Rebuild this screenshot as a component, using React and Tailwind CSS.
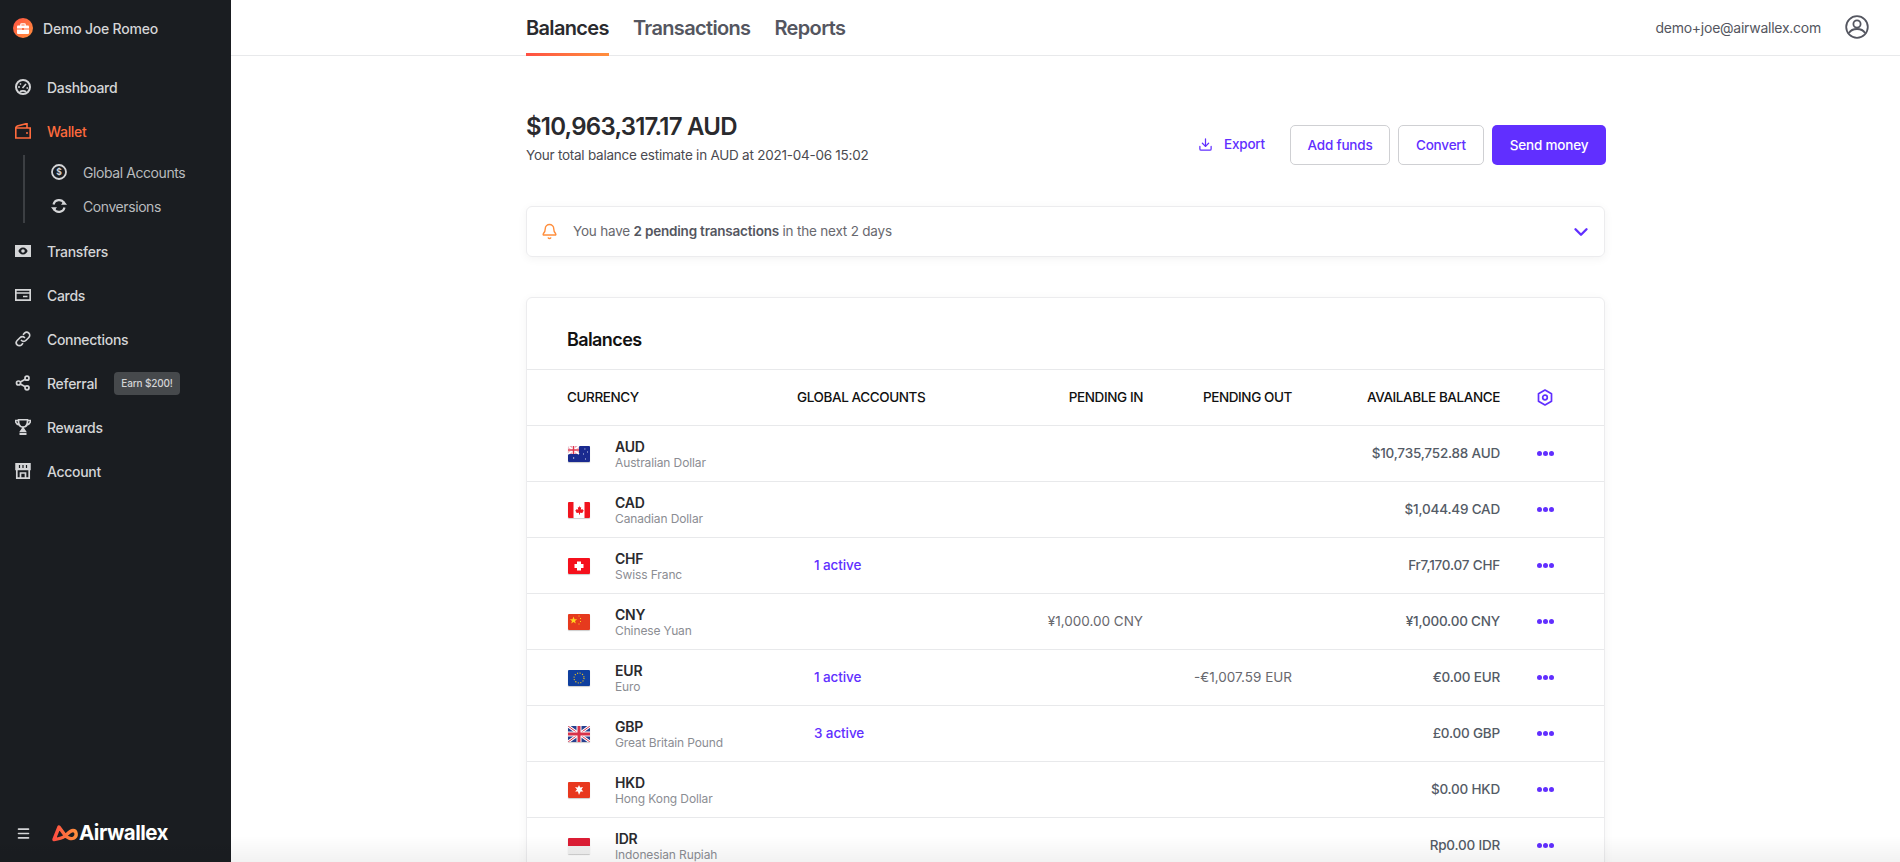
import React from "react";
import { ChevronDown, Bell, Download, Menu } from "lucide-react";

const font = { fontFamily: "Inter, 'Noto Sans', sans-serif" };

const Briefcase = () => (
  <svg width="12" height="11" viewBox="0 0 12 11" fill="none">
    <path d="M3.800 3V1.500c0-.4.300-.7.700-.7h3c.4 0 .7.300.7.700V3" stroke="#fff" strokeWidth="1.200" />
    <rect x="0" y="2.500" width="12" height="8.500" rx="1" fill="#fff" />
    <path d="M0 6h12" stroke="#ff6b3d" strokeWidth="1" />
    <rect x="5" y="5" width="2" height="2" fill="#ff6b3d" />
  </svg>
);

const icons = {
  Dashboard: (
    <svg width="16" height="16" viewBox="0 0 16 16" fill="none" stroke="currentColor" strokeWidth="2">
      <circle cx="8" cy="8" r="7" />
      <path d="M7.500 9l3.500-4M3 8h2M11.500 9H13M5 4.500l1 1M5 13c1-1.500 5-1.500 6 0" strokeWidth="1.600" />
    </svg>
  ),
  Wallet: (
    <svg width="16" height="16" viewBox="0 0 16 16" fill="none" stroke="currentColor" strokeWidth="1.600">
      <path d="M.8 5h14.400v10H.8zM.8 5c0-1 .5-1.500 1.500-2l9.700-2.500V5M11 10h2" />
    </svg>
  ),
  Transfers: (
    <svg width="16" height="12" viewBox="0 0 16 12">
      <path fillRule="evenodd" clipRule="evenodd" fill="currentColor" d="M0 0h16v12H0zM8 2.500C5.500 2.500 4 4.500 3.400 6 4 7.500 5.500 9.500 8 9.500s4-2 4.600-3.500C12 4.500 10.500 2.500 8 2.500zM8 4.200a1.800 1.800 0 110 3.600 1.800 1.800 0 010-3.600z" />
    </svg>
  ),
  Cards: (
    <svg width="16" height="12" viewBox="0 0 16 12" fill="none" stroke="currentColor" strokeWidth="1.700">
      <path d="M.8.8h14.400v10.400H.8zM.8 4h14.400M8 7.500h4.500" />
    </svg>
  ),
  Connections: (
    <svg width="16" height="16" viewBox="0 0 16 16" fill="none" stroke="currentColor" strokeWidth="1.700" strokeLinecap="round">
      <path d="M6.500 9.500a3 3 0 004.300 0l3-3a3 3 0 00-4.300-4.300L8.500 3.300" />
      <path d="M9.500 6.500a3 3 0 00-4.300 0l-3 3a3 3 0 004.300 4.300l1-1.100" />
    </svg>
  ),
  Referral: (
    <svg width="16" height="16" viewBox="0 0 16 16" fill="none" stroke="currentColor" strokeWidth="1.700">
      <circle cx="3.500" cy="8" r="2" />
      <circle cx="12" cy="3.200" r="2" />
      <circle cx="12" cy="12.800" r="2" />
      <path d="M5.300 7l5-2.800M5.300 9l5 2.800" />
    </svg>
  ),
  Rewards: (
    <svg width="16" height="16" viewBox="0 0 16 16" fill="none" stroke="currentColor" strokeWidth="1.600">
      <path d="M3.500.8h9V4c0 2.500-2 4-4.500 4S3.500 6.500 3.500 4zM.5 1.500h3c0 2 .2 3.500 1 4.500C2 5.500.5 4 .5 1.500zM15.500 1.500h-3c0 2-.2 3.500-1 4.500 2.500-.5 4-2 4-4.500z" />
      <path d="M8 8c0 2-2 3.500-2.500 4.500h5C10 11.500 8 10 8 8z" fill="currentColor" />
      <path d="M4.500 15h7" strokeWidth="2" />
    </svg>
  ),
  Account: (
    <svg width="16" height="16" viewBox="0 0 16 16" fill="none" stroke="currentColor" strokeWidth="1.500">
      <path d="M1 .8h14v5.700H1z" fill="currentColor" />
      <path d="M4.500 2v3M8 2v3M11.500 2v3" stroke="#1a1d21" strokeWidth="1.200" />
      <path d="M1.800 6.500v8.700h12.400V6.500M5.500 15.200V10h5v5.200" strokeWidth="1.700" />
    </svg>
  ),
};

const nav = ["Transfers", "Cards", "Connections", "Referral", "Rewards", "Account"];

function NavItem({ name, active, badge }) {
  return (
    <div className={`flex h-11 items-center ${active ? "text-[#ff6b3d]" : "text-[#d4d5d7]"}`}>
      <span className="flex w-[47px] shrink-0 justify-center pr-[1px]">{icons[name]}</span>
      <span className="text-[14px] font-medium tracking-[-0.3px]">{name}</span>
      {badge && (
        <span className="ml-[17px] flex h-[23px] items-center rounded-[4px] bg-[#46494c] px-[7px] text-[10px] font-medium tracking-[-0.15px] text-[#d4d5d7]">{badge}</span>
      )}
    </div>
  );
}

function Sidebar() {
  return (
    <aside className="flex h-full w-[231px] shrink-0 flex-col bg-[#1a1d21]">
      <div className="flex h-[56px] items-center pl-[13px]">
        <span className="flex h-5 w-5 items-center justify-center rounded-full bg-gradient-to-br from-[#ff4f42] to-[#ff8e3c]">
          <Briefcase />
        </span>
        <span className="ml-[10px] text-[14px] font-medium tracking-[-0.2px] text-[#d4d5d7]">Demo Joe Romeo</span>
      </div>
      <nav className="mt-[9px] flex flex-col">
        <NavItem name="Dashboard" />
        <NavItem name="Wallet" active />
        <div className="mb-[6px] ml-[23px] mt-[2px] flex flex-col border-l-2 border-[#3c3f43] pl-[26px]">
          <div className="flex h-[34px] items-center text-[#b9bbbe]">
            <svg width="16" height="16" viewBox="0 0 16 16" fill="none" className="mr-[16px]">
              <circle cx="8" cy="8" r="7" stroke="#d4d5d7" strokeWidth="1.800" />
              <text x="8" y="11" fontSize="8.500" fontWeight="700" textAnchor="middle" fill="#d4d5d7">$</text>
            </svg>
            <span className="text-[14px] tracking-[-0.42px]">Global Accounts</span>
          </div>
          <div className="flex h-[34px] items-center text-[#b9bbbe]">
            <svg width="16" height="16" viewBox="0 0 16 16" fill="none" stroke="#d4d5d7" strokeWidth="2.200" className="mr-[16px]">
              <path d="M2.500 6.500A5.700 5.700 0 0113 5M13.500 9.500A5.700 5.700 0 013 11" />
              <path d="M10 6.800h6l-3-3.800zM6 9.200H0l3 3.800z" fill="#d4d5d7" stroke="none" />
            </svg>
            <span className="text-[14px] tracking-[-0.42px]">Conversions</span>
          </div>
        </div>
        {nav.map((n) => (
          <NavItem key={n} name={n} badge={n === "Referral" ? "Earn $200!" : null} />
        ))}
      </nav>
      <div className="mt-auto mb-[16px] flex h-[26px] items-center pl-[16px]">
        <Menu size={15} strokeWidth={2.600} className="text-[#d4d5d7]" />
        <svg width="28" height="18" viewBox="0 0 28 18" fill="none" className="ml-[20px]">
          <defs>
            <linearGradient id="awx" x1="0" y1="0" x2="1" y2="0">
              <stop offset="0" stopColor="#ff4f42" />
              <stop offset="1" stopColor="#ff8e3c" />
            </linearGradient>
          </defs>
          <path d="M3 15.500L8 3l5.500 7.500C16 14 20 15.500 23 14c3.500-2 2.500-7.500-1-7.500-3 0-5 3-8 5.500C12 13.500 8 15 3 15.500z" stroke="url(#awx)" strokeWidth="3.400" strokeLinejoin="round" />
        </svg>
        <span className="text-[20.500px] font-bold tracking-[-0.5px] text-white">Airwallex</span>
      </div>
    </aside>
  );
}

const Flag = ({ code }) => {
  const flags = {
    AUD: (
      <>
        <rect width="22" height="16" fill="#1a2a8f" />
        <rect width="11" height="8" fill="#e8a0b0" />
        <path d="M0 0l11 8M11 0L0 8" stroke="#fff" strokeWidth="1.600" />
        <path d="M5.500 0v8M0 4h11" stroke="#fff" strokeWidth="2.600" />
        <path d="M5.500 0v8M0 4h11" stroke="#e0344c" strokeWidth="1.400" />
        <path d="M5 12h1.200M16.500 3h.8M19 6h.8M15 8h.8M17 13h.8" stroke="#fff" strokeWidth="1.200" />
      </>
    ),
    CAD: (
      <>
        <rect width="22" height="16" fill="#fff" />
        <rect width="5.500" height="16" fill="#f0141e" />
        <rect x="16.500" width="5.500" height="16" fill="#f0141e" />
        <path d="M11 3.500l1 2 1.200-.5-.4 2.800 1.700-.8.400 1.300 1.100.2-1.500 1.700.3.800-2.800-.3v1.800h-1v-1.800l-2.800.3.300-.8-1.500-1.700 1.100-.2.400-1.300 1.700.8-.4-2.800 1.200.5z" fill="#f0141e" />
      </>
    ),
    CHF: (
      <>
        <rect width="22" height="16" fill="#f5101c" />
        <path d="M9 3.500h4v2.500h2.500v4H13v2.500H9V10H6.500V6H9z" fill="#fff" />
      </>
    ),
    CNY: (
      <>
        <rect width="22" height="16" fill="#e63a1e" />
        <path d="M5.500 2.500l1 2.700h2.700L7 6.900l.8 2.700-2.300-1.600-2.300 1.600.8-2.700-2.200-1.700h2.700z" fill="#ffd31e" />
        <path d="M10.500 2h1M12 4.500h1M12 7.500h1M10.500 10h1" stroke="#ffd31e" strokeWidth="1" />
      </>
    ),
    EUR: (
      <>
        <rect width="22" height="16" fill="#0f3f9e" />
        <circle cx="11" cy="8" r="5" fill="none" stroke="#f5c518" strokeWidth="1.100" strokeDasharray="1.100 1.520" />
      </>
    ),
    GBP: (
      <>
        <rect width="22" height="16" fill="#27408f" />
        <path d="M0 0l22 16M22 0L0 16" stroke="#fff" strokeWidth="3" />
        <path d="M0 0l22 16M22 0L0 16" stroke="#d8324a" strokeWidth="1" />
        <path d="M11 0v16M0 8h22" stroke="#fff" strokeWidth="5" />
        <path d="M11 0v16M0 8h22" stroke="#d8324a" strokeWidth="3" />
      </>
    ),
    HKD: (
      <>
        <rect width="22" height="16" fill="#e8381e" />
        <path d="M11 3l1.200 2.500 2.800-.4-1.500 2.400 1.900 2.100-2.800-.1L11 13l-1.100-3.500-2.800.1L9 7.500 7 5.100l2.800.4z" fill="#fff" />
      </>
    ),
    IDR: (
      <>
        <rect width="22" height="16" fill="#f0f0f0" />
        <rect width="22" height="8" fill="#dc1c34" />
      </>
    ),
  };
  return (
    <svg width="22" height="16" viewBox="0 0 22 16" className="rounded-[1px] shadow-[0_1px_1px_rgba(0,0,0,0.2)]">
      {flags[code]}
    </svg>
  );
};

const rows = [
  { code: "AUD", name: "Australian Dollar", bal: "$10,735,752.88 AUD" },
  { code: "CAD", name: "Canadian Dollar", bal: "$1,044.49 CAD" },
  { code: "CHF", name: "Swiss Franc", global: "1 active", bal: "Fr7,170.07 CHF" },
  { code: "CNY", name: "Chinese Yuan", pin: "¥1,000.00 CNY", bal: "¥1,000.00 CNY" },
  { code: "EUR", name: "Euro", global: "1 active", pout: "-€1,007.59 EUR", bal: "€0.00 EUR" },
  { code: "GBP", name: "Great Britain Pound", global: "3 active", bal: "£0.00 GBP" },
  { code: "HKD", name: "Hong Kong Dollar", bal: "$0.00 HKD" },
  { code: "IDR", name: "Indonesian Rupiah", bal: "Rp0.00 IDR" },
];

const gridCols = "grid grid-cols-[229px_170px_176px_149px_208px_90px] items-center";

function BalanceRow({ r }) {
  return (
    <div className={`${gridCols} h-[56px] shrink-0 border-t border-[#e8e9eb] pl-[41px]`}>
      <div className="flex items-center">
        <Flag code={r.code} />
        <div className="ml-[25px] flex flex-col">
          <span className="text-[14px] leading-[17px] font-semibold tracking-[-0.2px] text-[#2a2a2e]">{r.code}</span>
          <span className="text-[12px] leading-[15px] tracking-[-0.12px] text-[#8b8d93]">{r.name}</span>
        </div>
      </div>
      <div className="pl-[17px] text-[13.500px] font-medium tracking-[-0.1px] text-[#612fff]">{r.global}</div>
      <div className="text-right text-[13.500px] text-[#68686e]">{r.pin}</div>
      <div className="text-right text-[13.500px] text-[#68686e]">{r.pout}</div>
      <div className="text-right text-[13.500px] font-medium tracking-[-0.2px] text-[#545b66]">{r.bal}</div>
      <div className="flex justify-center gap-[1px]">
        <span className="h-[5px] w-[5px] rounded-full bg-[#612fff]"></span>
        <span className="h-[5px] w-[5px] rounded-full bg-[#612fff]"></span>
        <span className="h-[5px] w-[5px] rounded-full bg-[#612fff]"></span>
      </div>
    </div>
  );
}

export default function App() {
  return (
    <div className="relative flex h-[862px] w-full overflow-hidden bg-white" style={font}>
      <Sidebar />
      <main className="flex min-w-0 flex-1 flex-col">
        <header className="flex h-[56px] shrink-0 items-stretch border-b border-[#e8e9eb] pl-[295px] pr-[31px]">
          <div className="relative flex items-center text-[20px] font-semibold tracking-[-0.65px] text-[#2a2a2e]">
            Balances
            <span className="absolute -bottom-px left-0 h-[3px] w-full bg-gradient-to-r from-[#ff4f42] to-[#ff8e3c]"></span>
          </div>
          <div className="ml-6 flex items-center text-[20px] font-semibold tracking-[-0.65px] text-[#545660]">Transactions</div>
          <div className="ml-6 flex items-center text-[20px] font-semibold tracking-[-0.65px] text-[#545660]">Reports</div>
          <div className="ml-auto flex items-center">
            <span className="text-[14px] tracking-[-0.25px] text-[#545660]">demo+joe@airwallex.com</span>
            <svg width="24" height="24" viewBox="0 0 24 24" fill="none" stroke="#545660" strokeWidth="1.800" className="ml-[24px] mb-[2px]">
              <circle cx="12" cy="12" r="10.800" />
              <circle cx="12" cy="9" r="3.600" />
              <path d="M4 18c2-3.500 4.500-4 8-4s6 .5 8 4" />
            </svg>
          </div>
        </header>
        <div className="ml-[295px] flex w-[1079px] flex-col">
          <section className="mt-[56px] flex items-start justify-between">
            <div>
              <h1 className="-mt-px text-[24px] leading-[32px] font-semibold tracking-[-0.77px] text-[#2a2a2e]">$10,963,317.17 AUD</h1>
              <p className="mt-[2px] text-[13.500px] leading-[20px] tracking-[-0.24px] text-[#4a4a50]">Your total balance estimate in AUD at 2021-04-06 15:02</p>
            </div>
            <div className="mt-[13px] flex h-10 items-center text-[13.500px] font-medium tracking-[-0.2px] text-[#612fff]">
              <Download size={15} strokeWidth={2} className="mb-[2px]" />
              <span className="ml-[11px] mr-[25px] mb-[1px]">Export</span>
              <button className="h-10 w-[100px] rounded-[5px] border border-[#cfd0d3]">Add funds</button>
              <button className="ml-2 h-10 w-[86px] rounded-[5px] border border-[#cfd0d3]">Convert</button>
              <button className="-mr-px ml-2 h-10 w-[114px] rounded-[5px] bg-[#612fff] text-white">Send money</button>
            </div>
          </section>
          <section className="mt-[41px] flex h-[51px] items-center rounded-[6px] border border-[#ececee] pl-[14px] pr-[12px] shadow-[0_2px_10px_rgba(0,0,0,0.05)]">
            <Bell size={17} strokeWidth={2} className="text-[#ff8e3c]" />
            <span className="ml-[15px] text-[13.500px] tracking-[-0.2px] text-[#68686e]">
              You have <b className="font-semibold text-[#545660]">2 pending transactions</b> in the next 2 days
            </span>
            <ChevronDown size={22} strokeWidth={2.600} className="ml-auto text-[#612fff]" />
          </section>
          <section className="mt-[40px] flex flex-col rounded-[6px] border border-[#ececee] shadow-[0_2px_10px_rgba(0,0,0,0.05)]">
            <h2 className="flex h-[71px] items-center pl-[40px] pt-[12px] text-[18px] font-semibold tracking-[-0.6px] text-[#111]">Balances</h2>
            <div className={`${gridCols} h-[56px] border-t border-[#e8e9eb] pl-[41px] text-[13.500px] font-medium tracking-[-0.4px] text-[#111]`}>
              <div className="-ml-px">CURRENCY</div>
              <div>GLOBAL ACCOUNTS</div>
              <div className="text-right">PENDING IN</div>
              <div className="text-right">PENDING OUT</div>
              <div className="text-right">AVAILABLE BALANCE</div>
              <div className="flex justify-center">
                <svg width="16" height="17" viewBox="0 0 16 17" fill="none" stroke="#612fff" strokeWidth="1.700">
                  <path d="M8 1l6.500 3.700v7.600L8 16l-6.500-3.700V4.700z" strokeLinejoin="round" />
                  <circle cx="8" cy="8.500" r="2.300" />
                </svg>
              </div>
            </div>
            {rows.map((r) => (
              <BalanceRow key={r.code} r={r} />
            ))}
          </section>
        </div>
      </main>
      <div className="pointer-events-none absolute bottom-0 left-0 right-0 h-[26px] bg-gradient-to-b from-transparent to-[#0000000d]"></div>
    </div>
  );
}
